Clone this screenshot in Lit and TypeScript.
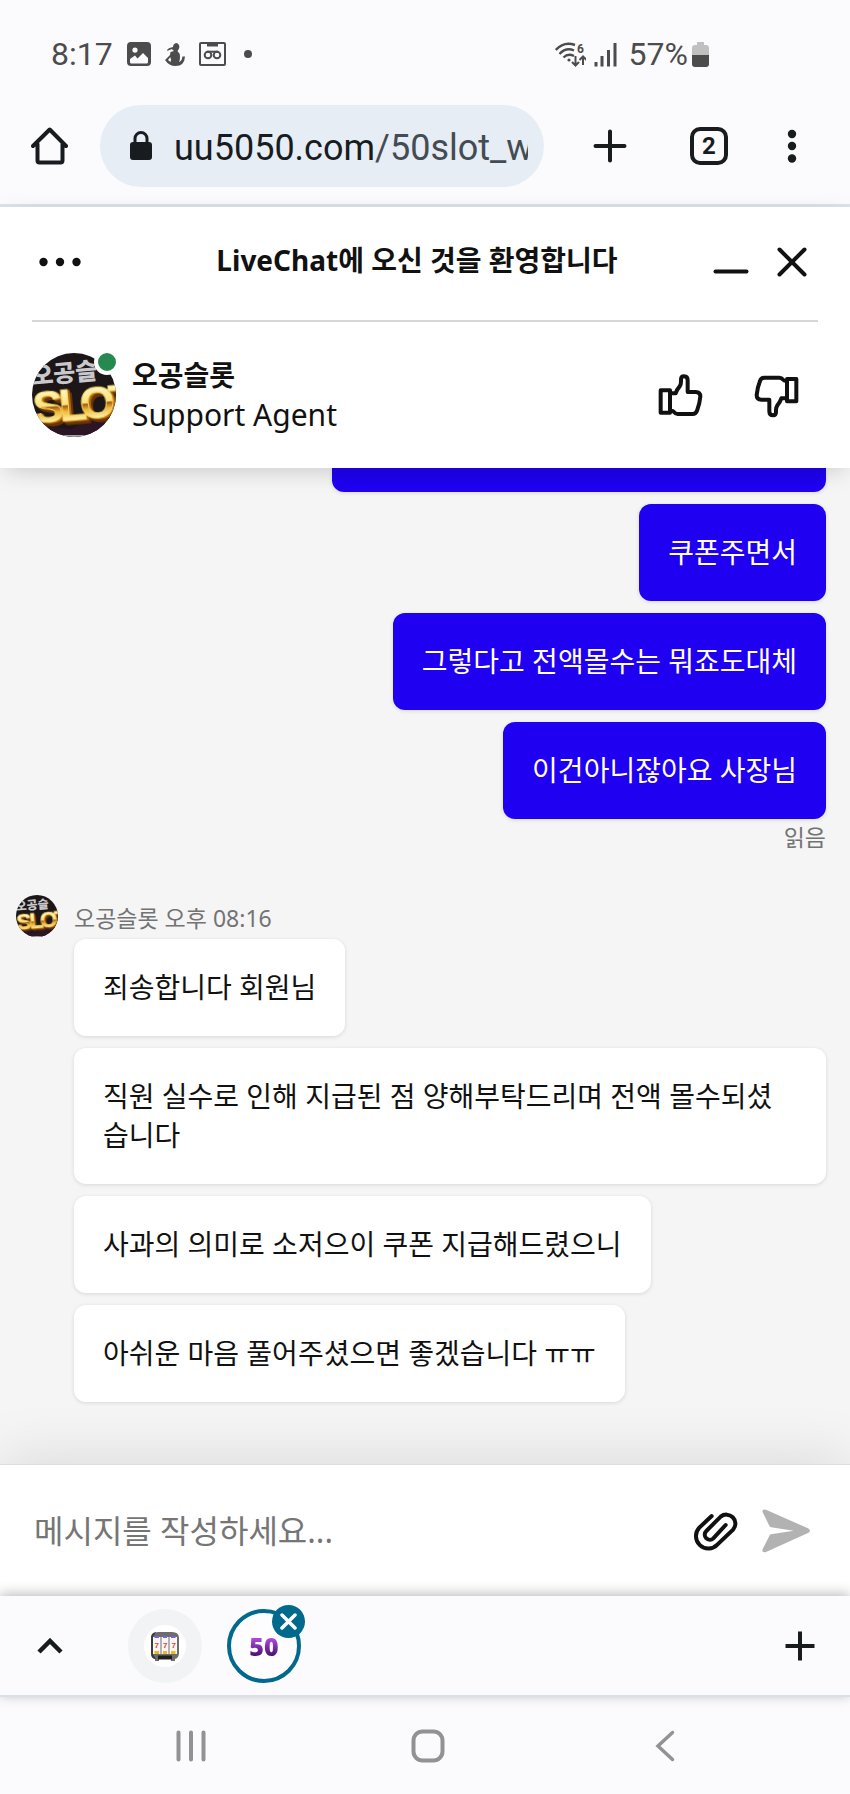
import { LitElement, html, css, svg } from "lit";
import { customElement, property } from "lit/decorators.js";
import { classMap } from "lit/directives/class-map.js";

const reset = css`
  * {
    box-sizing: border-box;
  }
  svg {
    display: block;
    flex: none;
  }
  button {
    display: flex;
    align-items: center;
    justify-content: center;
    flex: none;
    margin: 0;
    padding: 0;
    border: 0;
    background: none;
    color: inherit;
    font: inherit;
    cursor: pointer;
  }
`;

@customElement("agent-avatar")
export class AgentAvatar extends LitElement {
  static styles = css`
    :host {
      display: block;
      flex: none;
    }
    svg {
      display: block;
      width: 100%;
      height: 100%;
    }
    .name {
      font: 900 24px "Noto Sans CJK KR", sans-serif;
    }
    .slot {
      font: 700 45px "Liberation Sans", sans-serif;
      filter: drop-shadow(2px 1px 0 #b56a10) drop-shadow(2px 3px 0 #6b3405);
    }
  `;

  render() {
    return html`
      <svg viewBox="0 0 84 84" role="img" aria-label="오공슬롯">
        <defs>
          <clipPath id="round"><circle cx="42" cy="42" r="42" /></clipPath>
          <linearGradient id="gold" x1="0" y1="0" x2="0" y2="1">
            <stop offset="0.2" stop-color="#fff6bd" />
            <stop offset="0.48" stop-color="#fbe27a" />
            <stop offset="0.52" stop-color="#a85f0c" />
            <stop offset="0.62" stop-color="#f0b83a" />
            <stop offset="0.8" stop-color="#fff3a8" />
          </linearGradient>
        </defs>
        <g clip-path="url(#round)">
          <rect width="84" height="84" fill="#1c1618" />
          <path d="M0 72 40 76 60 62 84 60V84H0z" fill="#2c1524" />
          <path d="M22 82h40v2H22z" fill="#a5a5a5" />
          <g transform="rotate(-5 42 42)">
            <text class="name" x="1" y="28" fill="#c9c9cc">오공슬</text>
            <text class="slot" x="0 26 47 76" y="67" fill="url(#gold)" stroke="#f7d665" stroke-width="1">SLOT</text>
          </g>
        </g>
      </svg>
    `;
  }
}

@customElement("status-bar")
export class StatusBar extends LitElement {
  static styles = [
    reset,
    css`
      :host {
        display: flex;
        align-items: center;
        justify-content: space-between;
        padding: 36px 141px 16px 51px;
        color: #4c4c4c;
        font: 32px/36px Roboto, sans-serif;
      }
      .side {
        display: flex;
        align-items: center;
      }
      .notices {
        gap: 14px;
      }
      .system {
        gap: 8px;
      }
      .charge {
        display: flex;
        align-items: center;
        gap: 4px;
        padding-left: 4px;
      }
      .wifi-label {
        font: 700 12px Roboto, sans-serif;
      }
    `,
  ];

  render() {
    return html`
      <div class="side notices">
        <span>8:17</span>
        <svg width="24" height="24" viewBox="0 0 24 24" fill="currentColor">
          <path
            fill-rule="evenodd"
            d="M4 0h16a4 4 0 0 1 4 4v16a4 4 0 0 1-4 4H4a4 4 0 0 1-4-4V4a4 4 0 0 1 4-4zM8 5.500a2.600 2.600 0 1 0 0 5.200 2.600 2.600 0 0 0 0-5.200zM3 17v3q0 1.500 1.500 1.500h15q1.500 0 1.500-1.500v-4l-5-5-5.500 5.500-2.500-3z"
          />
        </svg>
        <svg width="20" height="24" viewBox="0 0 20 24" fill="currentColor">
          <path
            fill-rule="evenodd"
            d="M11 1a3.800 3.800 0 0 1 3 5.500q-.8 1.500-1.500 2.500 2.500 2 2.500 6 0 3-1 5 3-1 3.400-5.500h2.600q-.5 9.500-9.500 9.500Q4 24 0 18l5-5 .5-3L9 9q-1.500-1-2-2L2 9q0-2 2.500-3L8 5q0-3 3-4zM5 15.500 3 18l2.500 2q1-2 0-4.500z"
          />
        </svg>
        <svg width="27" height="24" viewBox="0 0 27 24" fill="none" stroke="currentColor" stroke-width="2">
          <rect x="1" y="1" width="25" height="22" rx="1" />
          <path d="M9 2h9v1.500H9z" />
          <circle cx="9" cy="13" r="3.300" />
          <circle cx="18" cy="13" r="3.300" />
          <path d="M8 9.700h11" />
        </svg>
        <svg width="16" height="8" viewBox="0 0 16 8"><circle cx="8" cy="4" r="4" fill="currentColor" /></svg>
      </div>
      <div class="side system">
        <svg width="31" height="25" viewBox="0 0 31 25" fill="none" stroke="currentColor" stroke-width="2.400">
          <path d="M.8 8Q9-1 20 3M4.500 12Q11 5 19 8.500M8.500 15.500Q13 11 19 14" />
          <circle cx="14" cy="18" r="1.600" fill="currentColor" stroke="none" />
          <path d="M20.500 14v9m-3.500-3 3.500 3.500L24 20M28 23v-8m-3.500 3 3.500-3.500 3.500 3.500" stroke-width="2" />
          <text class="wifi-label" x="22" y="11" fill="currentColor" stroke="none">6</text>
        </svg>
        <svg width="23" height="25" viewBox="0 0 23 25" stroke="currentColor" stroke-width="3">
          <path d="M2 20v4.500M8 14v10.500M14.500 8v16.500M21 1v23.500" />
        </svg>
        <div class="charge">
          <span>57%</span>
          <svg width="17" height="25" viewBox="0 0 17 25">
            <path d="M5 0h7v3h2a3 3 0 0 1 3 3v8H0V6a3 3 0 0 1 3-3h2z" fill="#c0c0c0" />
            <path d="M0 13h17v9a3 3 0 0 1-3 3H3a3 3 0 0 1-3-3z" fill="#4c4c4c" />
          </svg>
        </div>
      </div>
    `;
  }
}

@customElement("browser-toolbar")
export class BrowserToolbar extends LitElement {
  static styles = [
    reset,
    css`
      :host {
        display: flex;
        align-items: center;
        padding: 17px 50px 17px 31px;
        border-bottom: 3px solid #dde3ea;
        color: #191c1f;
      }
      .address {
        flex: 1;
        min-width: 0;
        height: 82px;
        justify-content: flex-start;
        gap: 21px;
        margin: 0 42px 0 31px;
        padding: 0 16px 0 29px;
        border-radius: 41px;
        background: #e6edf4;
        font: 36px/44px Roboto, sans-serif;
      }
      .url {
        flex: 1;
        min-width: 0;
        padding-top: 4px;
        overflow: hidden;
        white-space: nowrap;
        text-align: left;
      }
      .path {
        color: #444b52;
      }
      .actions {
        display: flex;
        align-items: center;
        gap: 51px;
      }
      .icon {
        width: 48px;
        height: 48px;
      }
      .more {
        width: 16px;
        height: 48px;
      }
      .count {
        width: 38px;
        height: 38px;
        border: 4px solid currentColor;
        border-radius: 10px;
        font: 700 24px/30px Roboto, sans-serif;
        text-align: center;
      }
    `,
  ];

  render() {
    return html`
      <button aria-label="홈">
        <svg width="38" height="38" viewBox="0 0 38 38" fill="none" stroke="currentColor" stroke-width="4" stroke-linejoin="round" stroke-linecap="round">
          <path d="M2 19 18.700 2.500 35 19M6.500 17v16.500q0 2 2 2h21q2 0 2-2V17" />
        </svg>
      </button>
      <button class="address">
        <svg width="24" height="30" viewBox="0 0 24 30">
          <rect x="1" y="11" width="22" height="18" rx="3" fill="currentColor" />
          <path d="M6 12V7.500a6 6 0 0 1 12 0V12" fill="none" stroke="currentColor" stroke-width="3" />
        </svg>
        <span class="url">uu5050.com<span class="path">/50slot_w</span></span>
      </button>
      <div class="actions">
        <button class="icon" aria-label="새 탭">
          <svg width="34" height="34" viewBox="0 0 34 34" stroke="currentColor" stroke-width="4" stroke-linecap="round">
            <path d="M17 2.500v29M2.500 17h29" />
          </svg>
        </button>
        <button class="icon" aria-label="탭 목록"><span class="count">2</span></button>
        <button class="more" aria-label="메뉴">
          <svg width="10" height="34" viewBox="0 0 10 34" fill="currentColor">
            <circle cx="5" cy="5" r="4.200" /><circle cx="5" cy="17" r="4.200" /><circle cx="5" cy="29.500" r="4.200" />
          </svg>
        </button>
      </div>
    `;
  }
}

const thumb = svg`
  <rect x="11" y="58" width="28" height="67" />
  <path d="M42 67h14q4-12 12-21 4-6 4-14v-6q0-10 9-10 11 0 11 12v35h24q14 0 14 14-2 22-10 42-3 10-13 10H62q-7 0-11-6-3-4-9-4" />
`;

@customElement("chat-header")
export class ChatHeader extends LitElement {
  static styles = [
    reset,
    css`
      :host {
        display: block;
        position: relative;
        z-index: 1;
        padding: 0 32px;
        background: #fff;
        color: #111;
        font: 28px/40px "Noto Sans", "Noto Sans CJK KR", sans-serif;
        box-shadow: 0 6px 24px -6px rgba(0, 0, 0, 0.22);
      }
      .bar {
        display: grid;
        grid-template-columns: 96px 1fr 112px;
        align-items: center;
        height: 115px;
        padding-bottom: 4px;
        border-bottom: 2px solid #d6d6d6;
      }
      h1 {
        margin: 0;
        padding-bottom: 4px;
        font-size: 28px;
        line-height: 40px;
        font-weight: 700;
        text-align: center;
        white-space: nowrap;
      }
      .menu {
        width: 56px;
        height: 48px;
      }
      .window {
        display: flex;
        justify-content: flex-end;
        gap: 13px;
        padding-right: 2px;
      }
      .window button {
        width: 48px;
        height: 48px;
      }
      .agent {
        display: flex;
        align-items: center;
        gap: 16px;
        height: 146px;
      }
      .portrait {
        position: relative;
      }
      .face {
        width: 84px;
        height: 84px;
      }
      .online {
        position: absolute;
        top: -4px;
        right: -4px;
        width: 26px;
        height: 26px;
        border: 4px solid #fff;
        border-radius: 50%;
        background: #268a50;
      }
      .who {
        flex: 1;
        font-size: 30px;
      }
      .who strong {
        display: block;
        font-size: 28px;
      }
      .rating {
        display: flex;
        gap: 47px;
        padding-right: 18px;
      }
    `,
  ];

  render() {
    return html`
      <div class="bar">
        <button class="menu" aria-label="메뉴">
          <svg width="42" height="10" viewBox="0 0 42 10" fill="currentColor">
            <circle cx="4.500" cy="5" r="4.200" /><circle cx="21" cy="5" r="4.200" /><circle cx="37.500" cy="5" r="4.200" />
          </svg>
        </button>
        <h1>LiveChat에 오신 것을 환영합니다</h1>
        <div class="window">
          <button aria-label="최소화">
            <svg width="36" height="24" viewBox="0 0 36 24" stroke="currentColor" stroke-width="4" stroke-linecap="round">
              <path d="M2.500 21.500h31" />
            </svg>
          </button>
          <button aria-label="닫기">
            <svg width="30" height="30" viewBox="0 0 30 30" stroke="currentColor" stroke-width="4" stroke-linecap="round">
              <path d="M2.500 2.500l25 25M27.500 2.500l-25 25" />
            </svg>
          </button>
        </div>
      </div>
      <div class="agent">
        <div class="portrait">
          <agent-avatar class="face"></agent-avatar>
          <span class="online"></span>
        </div>
        <div class="who"><strong>오공슬롯</strong>Support Agent</div>
        <div class="rating">
          <button aria-label="좋아요">
            <svg width="48" height="48" viewBox="0 0 144 144" fill="none" stroke="currentColor" stroke-width="12" stroke-linejoin="round">${thumb}</svg>
          </button>
          <button aria-label="싫어요">
            <svg width="48" height="48" viewBox="0 0 144 144" fill="none" stroke="currentColor" stroke-width="12" stroke-linejoin="round">
              <g transform="translate(0 5) rotate(180 72 72)">${thumb}</g>
            </svg>
          </button>
        </div>
      </div>
    `;
  }
}

@customElement("chat-bubble")
export class ChatBubble extends LitElement {
  @property({ type: Boolean }) mine = false;
  @property() text = "";

  static styles = css`
    :host {
      display: block;
      max-width: 100%;
    }
    .bubble {
      padding: 29px;
      border-radius: 12px;
      background: #fff;
      color: #111;
      font: 28px/39px "Noto Sans", "Noto Sans CJK KR", sans-serif;
      box-shadow: 0 1px 4px rgba(0, 0, 0, 0.12);
    }
    .mine {
      background: #1f00f0;
      color: #fff;
    }
  `;

  render() {
    return html`<div class=${classMap({ bubble: true, mine: this.mine })}>${this.text}</div>`;
  }
}

@customElement("chat-log")
export class ChatLog extends LitElement {
  private sent = ["쿠폰주면서", "그렇다고 전액몰수는 뭐죠도대체", "이건아니잖아요 사장님"];
  private received = [
    "죄송합니다 회원님",
    "직원 실수로 인해 지급된 점 양해부탁드리며 전액 몰수되셨습니다",
    "사과의 의미로 소저으이 쿠폰 지급해드렸으니",
    "아쉬운 마음 풀어주셨으면 좋겠습니다 ㅠㅠ",
  ];

  static styles = css`
    :host {
      display: flex;
      flex-direction: column;
      flex: 1;
      padding: 0 24px 62px 16px;
      background: #f5f5f5;
      color: #737373;
      font: 23px/32px "Noto Sans", "Noto Sans CJK KR", sans-serif;
    }
    .sent,
    .received {
      display: flex;
      flex-direction: column;
      gap: 12px;
    }
    .sent {
      align-items: flex-end;
    }
    .earlier {
      width: 61%;
      height: 24px;
      border-radius: 0 0 12px 12px;
      background: #1f00f0;
      box-shadow: 0 1px 4px rgba(0, 0, 0, 0.12);
    }
    .read {
      margin: 2px 0 42px;
      text-align: right;
    }
    .from {
      display: flex;
      align-items: center;
      gap: 16px;
      padding-bottom: 2px;
    }
    .from span {
      padding-top: 4px;
    }
    .face {
      width: 42px;
      height: 42px;
    }
    .received {
      align-items: flex-start;
      padding-left: 58px;
    }
  `;

  render() {
    return html`
      <div class="sent">
        <div class="earlier"></div>
        ${this.sent.map((t) => html`<chat-bubble mine .text=${t}></chat-bubble>`)}
      </div>
      <div class="read">읽음</div>
      <div class="from">
        <agent-avatar class="face"></agent-avatar>
        <span>오공슬롯 오후 08:16</span>
      </div>
      <div class="received">${this.received.map((t) => html`<chat-bubble .text=${t}></chat-bubble>`)}</div>
    `;
  }
}

@customElement("chat-composer")
export class ChatComposer extends LitElement {
  static styles = [
    reset,
    css`
      :host {
        display: block;
        position: relative;
        background: #fff;
        border-top: 1px solid #dedede;
        box-shadow: 0 -8px 56px rgba(0, 0, 0, 0.1);
      }
      .row {
        display: flex;
        align-items: center;
        gap: 22px;
        height: 131px;
        padding: 0 40px 0 34px;
        color: #111;
      }
      input {
        flex: 1;
        min-width: 0;
        height: 64px;
        padding: 0;
        border: 0;
        outline: 0;
        background: none;
        color: #111;
        font: 32px/44px "Noto Sans", "Noto Sans CJK KR", sans-serif;
      }
      input::placeholder {
        color: #757575;
        opacity: 1;
      }
      .send {
        color: #b2b2b2;
      }
    `,
  ];

  render() {
    return html`
      <form class="row" @submit=${(e: Event) => e.preventDefault()}>
        <input type="text" placeholder="메시지를 작성하세요..." aria-label="메시지" />
        <button type="button" aria-label="파일 첨부">
          <svg width="48" height="48" viewBox="0 0 144 144" fill="none" stroke="currentColor" stroke-width="12" stroke-linecap="round">
            <path d="M59 27 22 62A36 36 0 0 0 76 113L124 67A27 27 0 0 0 86 29L43 72A15 15 0 0 0 64 94L101 54" />
          </svg>
        </button>
        <button class="send" aria-label="보내기">
          <svg width="48" height="48" viewBox="0 0 144 144" fill="currentColor">
            <path d="M12 8 138 64q12 7 0 14L12 135Q-2 138 2 126L22 87q1-4 5-5L95 71 27 61q-4-1-5-5L2 16Q-1 5 12 8z" />
          </svg>
        </button>
      </form>
    `;
  }
}

@customElement("tab-strip")
export class TabStrip extends LitElement {
  static styles = [
    reset,
    css`
      :host {
        display: flex;
        align-items: center;
        position: relative;
        height: 99px;
        padding: 0 26px;
        border-bottom: 2px solid #d9e0e7;
        background: #fbfbfe;
        color: #191c1f;
        box-shadow: 0 -2px 12px rgba(0, 0, 0, 0.28);
      }
      .step {
        width: 48px;
        height: 48px;
      }
      .tabs {
        display: flex;
        flex: 1;
        gap: 25px;
        padding-left: 54px;
      }
      .tab {
        width: 74px;
        height: 74px;
        border-radius: 50%;
        background: #f2f3f5;
      }
      .favicon {
        display: flex;
        align-items: center;
        justify-content: center;
        width: 42px;
        height: 42px;
        border-radius: 50%;
        background: #fff;
      }
      .seven {
        font: 700 8px "Liberation Sans", sans-serif;
      }
      .current {
        position: relative;
      }
      .current .tab {
        border: 4px solid #00698c;
        background: #fdfdff;
      }
      .fifty {
        font: 800 25px/32px "Open Sans", sans-serif;
        background: linear-gradient(#b24be0 25%, #4b126e 80%);
        background-clip: text;
        -webkit-background-clip: text;
        color: transparent;
      }
      .close {
        position: absolute;
        top: -4px;
        right: -4px;
        width: 33px;
        height: 33px;
        border-radius: 50%;
        background: #00698c;
        color: #fff;
      }
    `,
  ];

  render() {
    return html`
      <button class="step" aria-label="펼치기">
        <svg width="26" height="16" viewBox="0 0 26 16" fill="none" stroke="currentColor" stroke-width="4.500">
          <path d="M2 14 13 3l11 11" />
        </svg>
      </button>
      <div class="tabs">
        <button class="tab" aria-label="슬롯 탭">
          <span class="favicon">
            <svg width="30" height="30" viewBox="0 0 30 30">
              <path d="M1 7Q1 1 8 1h14q7 0 7 6v15q0 5-4 6v2h-4v-2H9v2H5v-2q-4-1-4-6z" fill="#6d6d6d" />
              <path d="M1 7Q1 2 6 1L3 6v17l3 5q-5 0-5-6z" fill="#3c3c3c" />
              <path d="M3 6h7.500v17H3zM11.500 6h7v17h-7zM19.500 6H27v17h-7.500z" fill="#fbf6f6" />
              <path d="M4.500 5h4.500v2H4.500zM13 5h4v2h-4zM21 5h4.500v2H21z" fill="#7b62d8" />
              <path d="M4.500 20h4.500v3H4.500zM13 20h4v3h-4zM21 20h4.500v3H21z" fill="#f2b51d" />
              <path d="M8 24.500h14v4H8z" fill="#1f1f1f" />
              <text class="seven" x="4.500 13 21.500" y="17" fill="#ea3d2f">777</text>
            </svg>
          </span>
        </button>
        <div class="current">
          <button class="tab"><span class="fifty">50</span></button>
          <button class="close" aria-label="탭 닫기">
            <svg width="17" height="17" viewBox="0 0 17 17" stroke="currentColor" stroke-width="3.500" stroke-linecap="round">
              <path d="M2 2l13 13M15 2 2 15" />
            </svg>
          </button>
        </div>
      </div>
      <button class="step" aria-label="새 탭">
        <svg width="30" height="30" viewBox="0 0 30 30" stroke="currentColor" stroke-width="4"><path d="M15 .5v29M.5 15h29" /></svg>
      </button>
    `;
  }
}

@customElement("system-nav")
export class SystemNav extends LitElement {
  static styles = [
    reset,
    css`
      :host {
        display: grid;
        grid-template-columns: repeat(3, 1fr);
        justify-items: center;
        align-items: center;
        height: 97px;
        padding: 0 66px 0 72px;
        background: #fbfbfe;
        color: #929295;
      }
      button {
        width: 64px;
        height: 64px;
      }
    `,
  ];

  render() {
    return html`
      <button aria-label="최근 앱">
        <svg width="32" height="32" viewBox="0 0 32 32" stroke="currentColor" stroke-width="4" stroke-linecap="round">
          <path d="M3.500 2.500v27M16 2.500v27M28.500 2.500v27" />
        </svg>
      </button>
      <button aria-label="홈 화면">
        <svg width="34" height="34" viewBox="0 0 34 34" fill="none" stroke="currentColor" stroke-width="4">
          <rect x="2.500" y="2.500" width="29" height="29" rx="9" />
        </svg>
      </button>
      <button aria-label="뒤로">
        <svg width="20" height="32" viewBox="0 0 20 32" fill="none" stroke="currentColor" stroke-width="3.500" stroke-linecap="round">
          <path d="M17.500 2.500 3 16l14.500 13.500" />
        </svg>
      </button>
    `;
  }
}

@customElement("app-root")
export class AppRoot extends LitElement {
  static styles = css`
    :host {
      display: flex;
      flex-direction: column;
      min-height: 100vh;
      background: #fbfbfe;
    }
  `;

  render() {
    return html`
      <status-bar></status-bar>
      <browser-toolbar></browser-toolbar>
      <chat-header></chat-header>
      <chat-log></chat-log>
      <chat-composer></chat-composer>
      <tab-strip></tab-strip>
      <system-nav></system-nav>
    `;
  }
}
